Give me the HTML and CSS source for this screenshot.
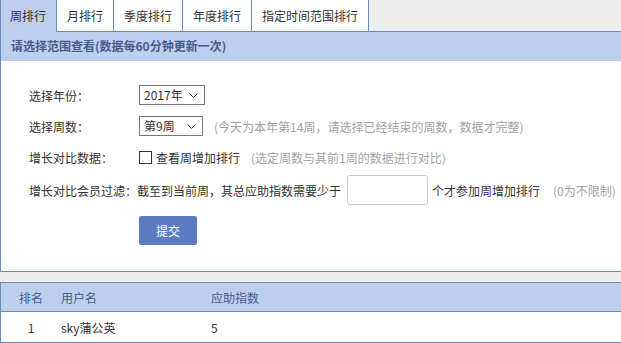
FILE: index.html
```html
<!DOCTYPE html>
<html>
<head>
  <meta charset="utf-8">
  <title>周排行</title>
  <link rel="stylesheet" href="styles.css">
</head>
<body>
  <div class="wrap">
    <ul class="tabs">
      <li class="tab active">周排行</li>
      <li class="tab">月排行</li>
      <li class="tab">季度排行</li>
      <li class="tab">年度排行</li>
      <li class="tab">指定时间范围排行</li>
    </ul>

    <div class="panel">
      <div class="panel-head">请选择范围查看(数据每60分钟更新一次)</div>
      <div class="panel-body">
        <div class="row">
          <span class="label">选择年份：</span>
          <span class="select year">
            <span class="select-text">2017年</span>
            <svg class="chevron" width="9" height="5" viewBox="0 0 9 5"><path d="M0.5 0.5 L4.5 4.5 L8.5 0.5" fill="none" stroke="#444" stroke-width="1"/></svg>
          </span>
        </div>
        <div class="row">
          <span class="label">选择周数：</span>
          <span class="select week">
            <span class="select-text">第9周</span>
            <svg class="chevron" width="9" height="5" viewBox="0 0 9 5"><path d="M0.5 0.5 L4.5 4.5 L8.5 0.5" fill="none" stroke="#444" stroke-width="1"/></svg>
          </span>
          <span class="hint">(今天为本年第14周，请选择已经结束的周数，数据才完整)</span>
        </div>
        <div class="row">
          <span class="label">增长对比数据：</span>
          <span class="checkbox"></span>
          <span class="check-text">查看周增加排行</span>
          <span class="hint">(选定周数与其前1周的数据进行对比)</span>
        </div>
        <div class="row row-filter">
          <span>增长对比会员过滤：截至到当前周，其总应助指数需要少于</span>
          <input class="num-input" type="text">
          <span>个才参加周增加排行</span>
          <span class="hint hint-wide">(0为不限制)</span>
        </div>
        <div class="row row-btn">
          <button class="btn-submit">提交</button>
        </div>
      </div>
    </div>

    <table class="rank-table">
      <tr class="head">
        <th class="col-rank">排名</th>
        <th class="col-name">用户名</th>
        <th class="col-score">应助指数</th>
      </tr>
      <tr>
        <td class="col-rank">1</td>
        <td class="col-name">sky蒲公英</td>
        <td class="col-score">5</td>
      </tr>
    </table>
  </div>
</body>
</html>
```

FILE: styles.css
```css
body {
  margin: 0;
  background-color: #eeeeee;
  font-family: "Microsoft YaHei", "Noto Sans CJK SC", sans-serif;
  font-size: 12px;
  color: #333;
  overflow: hidden;
}

.wrap {
  width: 640px;
}

.tabs {
  display: flex;
  margin: 0;
  padding: 0;
  list-style: none;
  height: 31px;
  border-bottom: 1px solid #658db9;
}

.tab {
  height: 31px;
  line-height: 31px;
  padding: 0 10px;
  background-color: #fff;
  border-right: 1px solid #658db9;
}

.tab:first-child {
  padding-left: 9px;
  border-left: 1px solid #658db9;
}

.tab.active {
  height: 32px;
  background-color: #bccfed;
}

.panel {
  border-left: 1px solid #658db9;
  border-bottom: 1px solid #658db9;
  background-color: #fff;
}

.panel-head {
  height: 29px;
  line-height: 27px;
  padding-left: 10px;
  background-color: #bccfed;
  font-weight: bold;
  color: #4a5b8e;
}

.panel-body {
  padding: 24px 0 26px 28px;
}

.row {
  display: flex;
  align-items: center;
  height: 20px;
  margin-bottom: 11px;
}

.row:nth-child(3) {
  margin-bottom: 8px;
}

.label {
  width: 110px;
}

.select {
  position: relative;
  box-sizing: border-box;
  height: 20px;
  line-height: 18px;
  border: 1px solid #777;
  padding-left: 4px;
  background-color: #fff;
}

.select.year {
  width: 66px;
}

.select.week {
  width: 64px;
}

.chevron {
  position: absolute;
  right: 6px;
  top: 7px;
}

.hint {
  margin-left: 11px;
  color: #a3a3a3;
}

.checkbox {
  box-sizing: border-box;
  width: 13px;
  height: 13px;
  border: 1px solid #333;
  margin-right: 4px;
}

.row-filter {
  height: 30px;
}

.num-input {
  box-sizing: border-box;
  width: 81px;
  height: 30px;
  margin: 0 4px 0 6px;
  border: 1px solid #cccccc;
  border-radius: 3px;
}

.hint-wide {
  margin-left: 13px;
}

.row-btn {
  height: 29px;
  margin-bottom: 0;
  padding-left: 110px;
}

.btn-submit {
  width: 58px;
  height: 29px;
  border: none;
  border-radius: 2px;
  background-color: #5b7cc2;
  color: #fff;
  font-family: inherit;
  font-size: 12px;
}

.rank-table {
  margin-top: 10px;
  width: 100%;
  border-collapse: collapse;
  background-color: #fff;
  border-left: 1px solid #658db9;
}

.rank-table th,
.rank-table td {
  padding: 0;
  text-align: left;
  font-weight: normal;
  border-top: 1px solid #658db9;
  border-bottom: 1px solid #658db9;
}

.rank-table .head {
  height: 29px;
  background-color: #bccfed;
  color: #4a5b8e;
}

.rank-table tr {
  height: 31px;
}

.rank-table .col-rank {
  width: 60px;
  text-align: center;
}

.rank-table .col-name {
  width: 150px;
}
```
